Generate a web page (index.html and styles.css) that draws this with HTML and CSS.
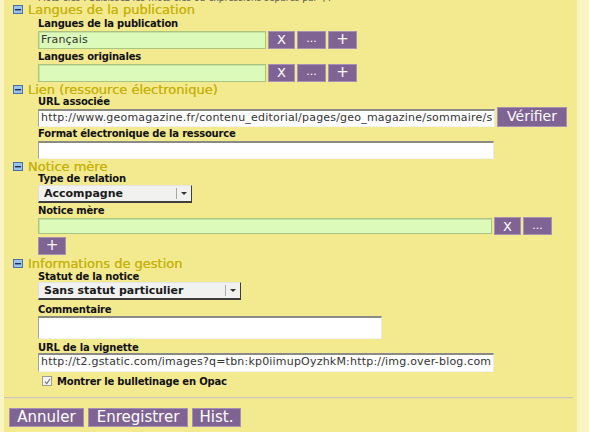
FILE: index.html
```html
<!DOCTYPE html>
<html lang="fr">
<head>
<meta charset="utf-8">
<title>Notice</title>
<link rel="stylesheet" href="styles.css">
</head>
<body>
<div class="page">
  <div class="panel">
    <div class="kw"><span>Mots-clés : Saisissez les mots clés ou expressions séparés par ';'.</span></div>

    <div class="sec-head">
      <svg class="ico" width="10" height="9" viewBox="0 0 10 9"><rect x="0.5" y="0.5" width="9" height="8" fill="#9cc2ee" stroke="#4b6fa6"/><rect x="2" y="4" width="6" height="1.4" fill="#1c2f55"/></svg>
      <span>Langues de la publication</span>
    </div>
    <div class="fields">
      <div class="lbl m2">Langues de la publication</div>
      <div class="row m2">
        <div class="in green w228">Français</div>
        <div class="btn bx">X</div><div class="btn bd">...</div><div class="btn bp">+</div>
      </div>
      <div class="lbl m2">Langues originales</div>
      <div class="row m2">
        <div class="in green w228"></div>
        <div class="btn bx">X</div><div class="btn bd">...</div><div class="btn bp">+</div>
      </div>
    </div>

    <div class="sec-head m1">
      <svg class="ico" width="10" height="9" viewBox="0 0 10 9"><rect x="0.5" y="0.5" width="9" height="8" fill="#9cc2ee" stroke="#4b6fa6"/><rect x="2" y="4" width="6" height="1.4" fill="#1c2f55"/></svg>
      <span>Lien (ressource électronique)</span>
    </div>
    <div class="fields">
      <div class="lbl">URL associée</div>
      <div class="row end">
        <div class="in white w457"><span class="clip">http://www.geomagazine.fr/contenu_editorial/pages/geo_magazine/sommaire/s</span></div>
        <div class="btn bver">Vérifier</div>
      </div>
      <div class="lbl m1">Format électronique de la ressource</div>
      <div class="row m2">
        <div class="in white w456"></div>
      </div>
    </div>

    <div class="sec-head m1">
      <svg class="ico" width="10" height="9" viewBox="0 0 10 9"><rect x="0.5" y="0.5" width="9" height="8" fill="#9cc2ee" stroke="#4b6fa6"/><rect x="2" y="4" width="6" height="1.4" fill="#1c2f55"/></svg>
      <span>Notice mère</span>
    </div>
    <div class="fields">
      <div class="lbl">Type de relation</div>
      <div class="sel w154 m1"><span class="sel-txt">Accompagne</span><span class="sel-arrow"></span></div>
      <div class="lbl m2">Notice mère</div>
      <div class="row rnot">
        <div class="in green w454 h16"></div>
        <div class="btn bx h20">X</div><div class="btn bd h20">...</div>
      </div>
      <div class="btn bp bplus m1">+</div>
    </div>

    <div class="sec-head m2">
      <svg class="ico" width="10" height="9" viewBox="0 0 10 9"><rect x="0.5" y="0.5" width="9" height="8" fill="#9cc2ee" stroke="#4b6fa6"/><rect x="2" y="4" width="6" height="1.4" fill="#1c2f55"/></svg>
      <span>Informations de gestion</span>
    </div>
    <div class="fields">
      <div class="lbl m1">Statut de la notice</div>
      <div class="sel w203"><span class="sel-txt">Sans statut particulier</span><span class="sel-arrow"></span></div>
      <div class="lbl m4">Commentaire</div>
      <div class="in white w343 h23 m1"></div>
      <div class="lbl m3">URL de la vignette</div>
      <div class="in white w456 h19"><span class="clip">http://t2.gstatic.com/images?q=tbn:kp0iimupOyzhkM:http://img.over-blog.com</span></div>
      <div class="chk-row m3">
        <span class="chk"><svg width="7" height="7" viewBox="0 0 7 7"><path d="M1 3.6 L2.8 5.6 L6 1" fill="none" stroke="#6d6d6d" stroke-width="1.1"/></svg></span>
        <span class="lbl">Montrer le bulletinage en Opac</span>
      </div>
    </div>

    <div class="sep"></div>

    <div class="actions">
      <div class="btn big b-ann">Annuler</div>
      <div class="btn big b-enr">Enregistrer</div>
      <div class="btn big b-his">Hist.</div>
    </div>
  </div>
</div>
</body>
</html>
```

FILE: styles.css
```css
html, body {
  margin: 0;
  padding: 0;
}
body {
  background: #faf4c3;
  font-family: "DejaVu Sans", "Noto Sans", sans-serif;
  color: #111;
}
.page {
  padding: 0 12px 0 4px;
  height: 432px;
  overflow: hidden;
}
.panel {
  background: #f3e98f;
  height: 432px;
}
.kw {
  height: 3px;
  overflow: hidden;
  padding-left: 34px;
  font-size: 9px;
  color: #555;
}
.kw span {
  display: block;
  line-height: 10px;
  margin-top: -7px;
  white-space: nowrap;
}
.sec-head {
  display: flex;
  align-items: center;
  height: 13px;
  padding-left: 9px;
  gap: 5px;
  color: #c7b20c;
  font-size: 13px;
  line-height: 13px;
  white-space: nowrap;
  text-shadow: 0 0 0.4px #c7b20c;
}
.ico {
  display: block;
  flex: none;
}
.fields {
  padding-left: 34px;
}
.lbl {
  display: block;
  font-weight: bold;
  font-size: 10px;
  letter-spacing: -0.2px;
  line-height: 11px;
  height: 11px;
  color: #111;
  white-space: nowrap;
}
.m1 { margin-top: 1px; }
.m2 { margin-top: 2px; }
.m3 { margin-top: 3px; }
.m4 { margin-top: 4px; }

.row {
  display: flex;
  align-items: center;
  gap: 2px;
}
.row.end {
  align-items: flex-end;
}
.in {
  box-sizing: border-box;
  height: 18px;
  font-size: 11px;
  letter-spacing: 0.2px;
  line-height: 15px;
  padding: 0 2px;
  color: #333;
  white-space: nowrap;
  overflow: hidden;
}
.clip {
  display: block;
  overflow: hidden;
  white-space: nowrap;
}
.green {
  background: #dcfab9;
  border: 1px solid #a9c47e;
  box-shadow: inset 1px 1px 0 #c7e3a3;
}
.white {
  background: #fff;
  border-style: solid;
  border-width: 2px 1px 1px 1px;
  border-color: #8a8a86 #e8e8e4 #f4f4ef #a2a29e;
  line-height: 14px;
}
.w228 { width: 228px; }
.w343 { width: 344px; }
.w454 { width: 454px; }
.w456 { width: 456px; }
.w457 { width: 457px; }
.h16 { height: 16px; }
.h19 { height: 19px; }
.h20 { height: 20px; }
.h23 { height: 23px; }

.btn {
  box-sizing: border-box;
  background: #7f6393;
  color: #fff;
  border: 1px solid #a690b5;
  height: 18px;
  font-size: 13px;
  line-height: 15px;
  text-align: center;
  flex: none;
}
.bx { width: 27px; }
.bd { width: 29px; line-height: 13px; font-size: 11px; }
.bp { width: 29px; font-size: 15px; }
.bver {
  width: 70px;
  height: 20px;
  font-size: 14px;
  line-height: 17px;
}
.rnot {
  height: 20px;
}
.bd.h20 { line-height: 16px; }
.bx.h20 { line-height: 17px; }
.bplus {
  width: 28px;
  height: 18px;
  line-height: 15px;
}

.sel {
  box-sizing: border-box;
  position: relative;
  height: 18px;
  background: #f1f1f0;
  border-style: solid;
  border-width: 1px 1px 2px 1px;
  border-color: #e4e4e2 #3e3e3e #3e3e3e #dedede;
  font-size: 11px;
  font-weight: bold;
  line-height: 15px;
  color: #1a1a1a;
  padding-left: 5px;
  white-space: nowrap;
}
.w154 { width: 154px; }
.w203 { width: 203px; }
.sel-arrow {
  position: absolute;
  right: 0;
  top: 2px;
  width: 14px;
  height: 11px;
  border-left: 1px solid #a8a8a8;
}
.sel-arrow::after {
  content: "";
  position: absolute;
  left: 4px;
  top: 4px;
  border-left: 3px solid transparent;
  border-right: 3px solid transparent;
  border-top: 3px solid #333;
}

.chk-row {
  display: flex;
  align-items: center;
  gap: 5px;
  padding-left: 4px;
  height: 12px;
}
.chk {
  box-sizing: border-box;
  width: 10px;
  height: 10px;
  border: 1px solid #9c9c98;
  background: #f4f4f2;
  display: flex;
  align-items: center;
  justify-content: center;
}
.chk svg { display: block; }

.sep {
  margin: 10px 4px 0 0;
  height: 1px;
  background: #c9c7b4;
  border-bottom: 1px solid #e8e2a8;
}

.actions {
  display: flex;
  gap: 4px;
  margin-top: 9px;
  padding-left: 5px;
}
.big {
  height: 19px;
  font-size: 15px;
  line-height: 16px;
}
.b-ann { width: 75px; }
.b-enr { width: 100px; }
.b-his { width: 49px; }
```
